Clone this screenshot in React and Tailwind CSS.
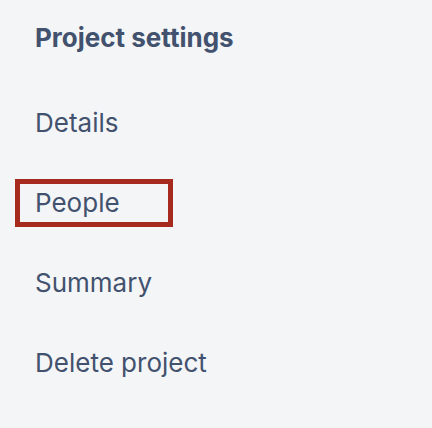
const items = ['Details', 'People', 'Summary', 'Delete project'];

export default function App() {
  return (
    <div
      className="w-[432px] h-[428px] bg-[#f4f5f7] text-[#42526e] overflow-hidden"
      style={{ fontFamily: 'Inter, "Noto Sans", sans-serif' }}
    >
      <div className="pt-[28px] pl-[35px] h-[48px] flex items-center">
        <h2 className="text-[26px] font-bold leading-none">Project settings</h2>
      </div>
      <nav className="mt-[51px] ml-[15px] flex flex-col gap-[32px]">
        {items.map((item) => (
          <div
            key={item}
            className={
              item === 'People'
                ? 'h-[48px] w-[158px] flex items-center pl-[15px] border-[5px] border-[#a62b1e]'
                : 'h-[48px] flex items-center pl-[20px]'
            }
          >
            <span className="text-[26px] leading-none">{item}</span>
          </div>
        ))}
      </nav>
    </div>
  );
}
